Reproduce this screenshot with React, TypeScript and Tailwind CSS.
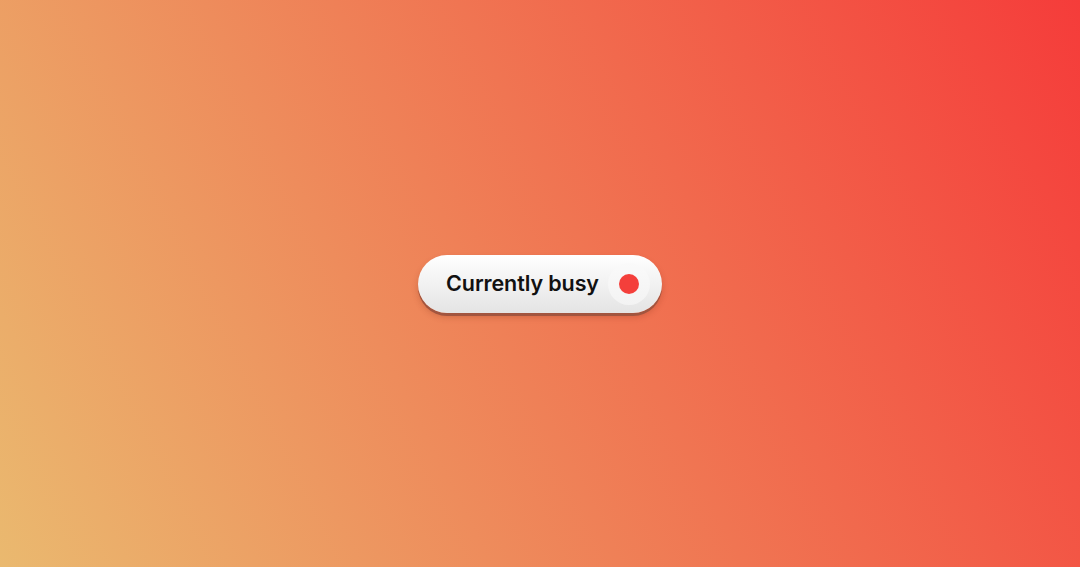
export default function App() {
  return (
    <div className="flex h-screen w-full items-center justify-center bg-linear-[63deg] from-[#eab96f] to-[#f53c3a]">
      <button
        type="button"
        className="flex h-[58px] items-center gap-[9px] rounded-full bg-linear-to-b from-white to-[#e4e4e4] pl-7 pr-3 shadow-[0_3px_0_#a2553f,0_4px_6px_rgba(120,40,20,0.25)]"
      >
        <span className="font-['Inter',sans-serif] text-[21.5px] font-semibold tracking-[-0.1px] text-[#111]">
          Currently busy
        </span>
        <span className="flex h-[42px] w-[42px] items-center justify-center rounded-full bg-linear-to-b from-[#fafafa] to-[#f3f3f3]">
          <span className="h-5 w-5 rounded-full bg-[#f43f3b]" />
        </span>
      </button>
    </div>
  );
}
